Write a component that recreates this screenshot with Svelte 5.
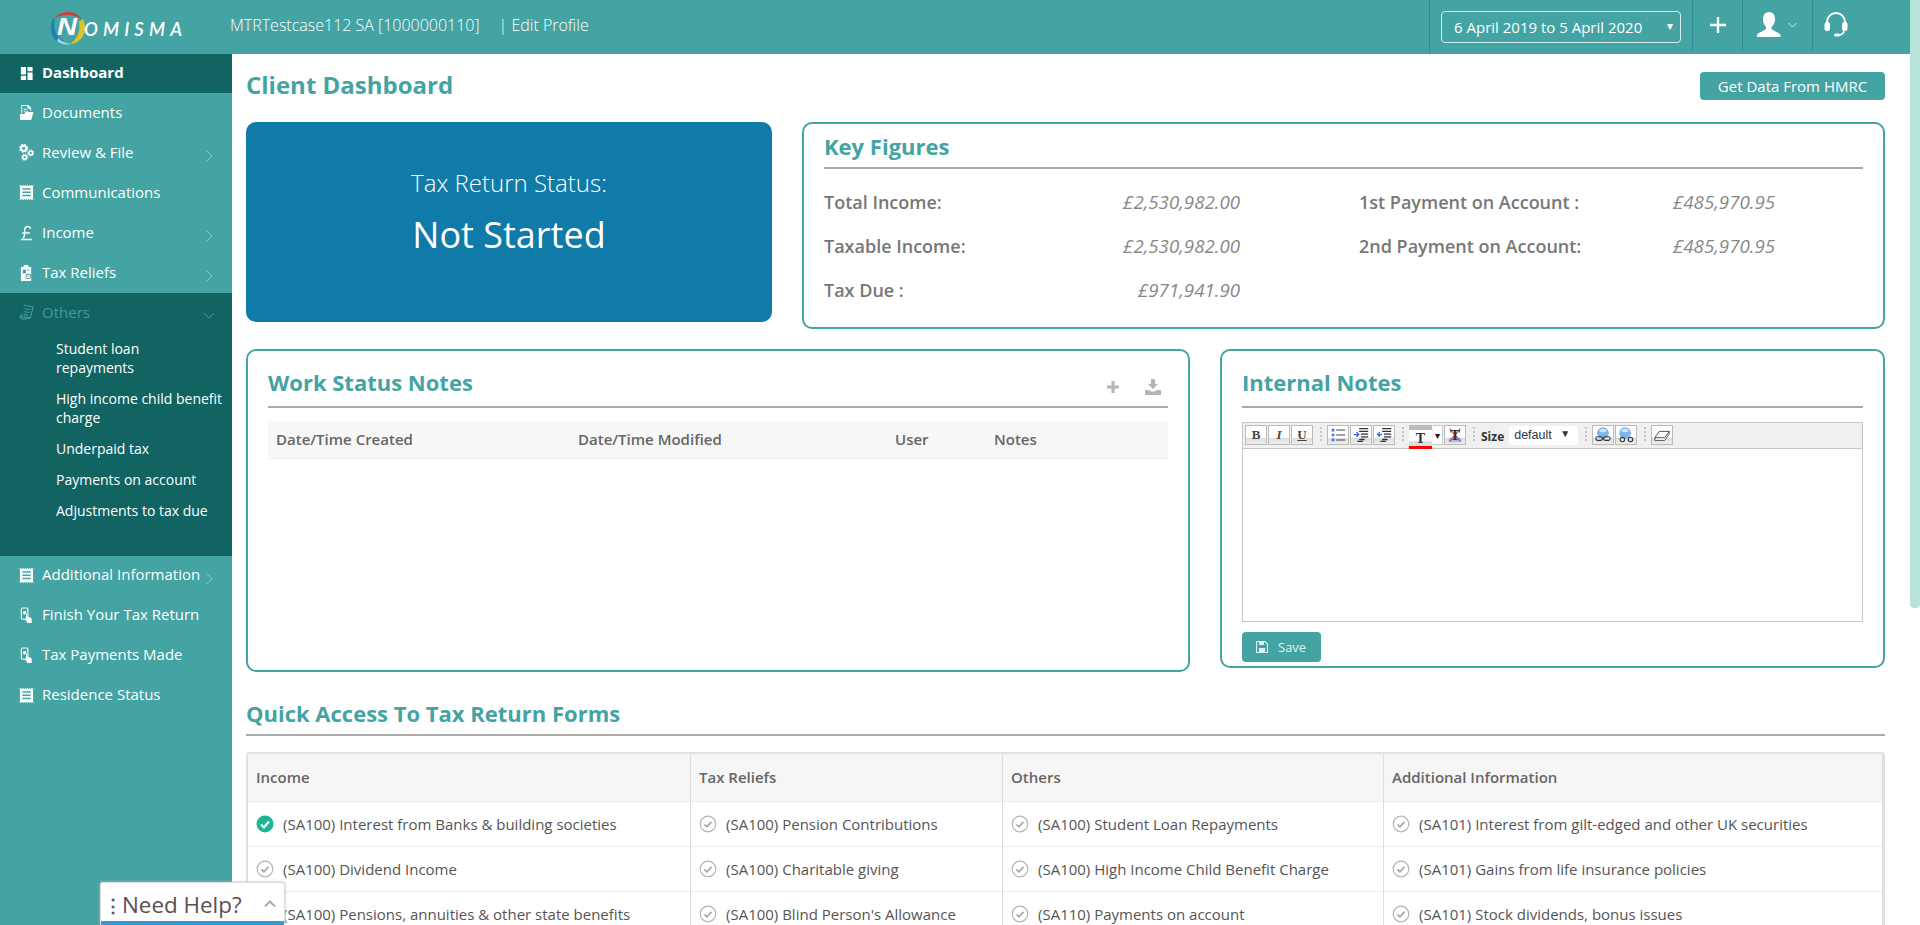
<script>
  const menuTop = [
    { label: 'Dashboard', icon: 'dash', active: true },
    { label: 'Documents', icon: 'docs' },
    { label: 'Review & File', icon: 'gears', arrow: true },
    { label: 'Communications', icon: 'list' },
    { label: 'Income', icon: 'pound', arrow: true },
    { label: 'Tax Reliefs', icon: 'clip', arrow: true }
  ];
  const subItems = [
    ['Student loan', 'repayments'],
    ['High income child benefit', 'charge'],
    ['Underpaid tax'],
    ['Payments on account'],
    ['Adjustments to tax due']
  ];
  const menuBottom = [
    { label: 'Additional Information', icon: 'list', arrow: true },
    { label: 'Finish Your Tax Return', icon: 'hand' },
    { label: 'Tax Payments Made', icon: 'hand' },
    { label: 'Residence Status', icon: 'list' }
  ];
  const headers = ['Income', 'Tax Reliefs', 'Others', 'Additional Information'];
  const rows = [
    [['(SA100) Interest from Banks & building societies', true], ['(SA100) Pension Contributions'], ['(SA100) Student Loan Repayments'], ['(SA101) Interest from gilt-edged and other UK securities']],
    [['(SA100) Dividend Income'], ['(SA100) Charitable giving'], ['(SA100) High Income Child Benefit Charge'], ['(SA101) Gains from life insurance policies']],
    [['(SA100) Pensions, annuities & other state benefits'], ["(SA100) Blind Person's Allowance"], ['(SA110) Payments on account'], ['(SA101) Stock dividends, bonus issues']]
  ];
</script>

{#snippet icon(name)}
  <svg class="micon" viewBox="0 0 16 18" fill="#fff">
    {#if name === 'dash'}
      <path d="M2 2h5.500v8H2zM9 2h5.500v4.500H9zM2 11.500h5.500V16H2zM9 8h5.500v8H9z"/>
    {:else if name === 'docs'}
      <path d="M2.500 1H10l3 3v3h-1V5H9V2H3.500v8h-1z"/><path d="M5 5h3v1H5zM5 7h5v1H5z"/><path d="M1 10.500h4.500L7 8.500h8.500L13 17H1z"/>
    {:else if name === 'gears'}
      <circle cx="5" cy="4.500" r="2.800" fill="none" stroke="#fff" stroke-width="2.200"/><circle cx="5" cy="4.500" r="4.300" fill="none" stroke="#fff" stroke-width="1.200" stroke-dasharray="1.800 1.600"/><circle cx="12.500" cy="9.500" r="2" fill="none" stroke="#fff" stroke-width="1.600"/><circle cx="12.500" cy="9.500" r="3.300" fill="none" stroke="#fff" stroke-width="1" stroke-dasharray="1.500 1.100"/><circle cx="6" cy="14" r="2" fill="none" stroke="#fff" stroke-width="1.600"/><circle cx="6" cy="14" r="3.300" fill="none" stroke="#fff" stroke-width="1" stroke-dasharray="1.500 1.100"/>
    {:else if name === 'list'}
      <path d="M1 2h14v14H1z"/><path d="M0.500 1.500h15M0.500 16.500h15" stroke="#fff" stroke-dasharray="1 1"/><path d="M3.500 4.500h9V6h-9zM3.500 8h9v1.500h-9zM3.500 11.500h9V13h-9z" fill="#44a3a3"/>
    {:else if name === 'pound'}
      <path d="M3.500 9.500h8M2 16.500h12M4.500 15c1.700-2 1.500-5 1.500-8 0-5.500 5.500-5.500 6.500-2" fill="none" stroke="#fff" stroke-width="1.500"/>
    {:else if name === 'clip'}
      <path d="M2 3h3V1h5v2h3v15H2z"/><circle cx="10" cy="13" r="3" fill="#44a3a3"/><circle cx="10" cy="13" r="2" fill="#fff"/><path d="M9.800 11.500V13h1.500" fill="none" stroke="#44a3a3" stroke-width=".8"/><path d="M4 6h3.500v4H4z" fill="#44a3a3"/><path d="M8.500 6H11v1H8.500z" fill="#44a3a3"/>
    {:else if name === 'hand'}
      <rect x="2.500" y="1" width="7" height="12" rx="1" fill="none" stroke="#fff" stroke-width="1.200"/><circle cx="6" cy="6" r="1.800"/><path d="M7.500 7.500c1-.5 1.500 0 1.500 1V10l3 1c1 .5 1.500 1 1.500 2v4H9l-3-4.500 1.500-.5z"/>
    {/if}
  </svg>
{/snippet}

{#snippet check(done)}
  {#if done}
    <svg class="tick" viewBox="0 0 18 18"><circle cx="9" cy="9" r="8.500" fill="#1db394"/><path d="M5 9.500l3 2.800 5-5.800" fill="none" stroke="#fff" stroke-width="2.200"/></svg>
  {:else}
    <svg class="tick" viewBox="0 0 18 18"><circle cx="9" cy="9" r="7.800" fill="none" stroke="#b5b5b5" stroke-width="1.200"/><path d="M5.500 9.500l2.500 2.300 4.500-5" fill="none" stroke="#aaa" stroke-width="1.800"/></svg>
  {/if}
{/snippet}

<div class="page">
  <header class="top">
    <div class="logo">
      <svg class="ring" viewBox="0 0 36 35">
        <path d="M5 8C10 1 24-1 32 9 24 4 12 4 5 8z" fill="#c9403a"/>
        <path d="M8 32C-1 26-1 12 5 7 3 15 4 26 14 31z" fill="#1f7fb5"/>
        <path d="M33 9c5 10 1 24-13 25 6-4 11-12 9-22z" fill="#dcc42a"/>
        <path d="M7 31c5 4 10 4 14 3-5-1-9-2-13-6z" fill="#a9d3ea"/>
      </svg>
      <span class="logo-n">N</span><span class="logo-rest">OMISMA</span>
    </div>
    <div class="client">MTRTestcase112 SA [1000000110]</div>
    <div class="edit">| Edit Profile</div>
    <div class="top-right">
      <div class="cell date-cell">
        <div class="date">6 April 2019 to 5 April 2020<span class="caret">▾</span></div>
      </div>
      <div class="cell plus-cell">
        <svg width="18" height="18" viewBox="0 0 18 18"><path d="M9 1v16M1 9h16" stroke="#fff" stroke-width="2.400"/></svg>
      </div>
      <div class="cell user-cell">
        <svg width="24" height="26" viewBox="0 0 24 26" fill="#fff"><path d="M12 0c4 0 6 3 6 7 0 3-1 6-3.500 8v2c2 2 7 3 9 6v2H0v-2c2-3 7-4 9-6v-2C7 13 6 10 6 7c0-4 2-7 6-7z"/></svg>
        <svg class="chev" width="9" height="6" viewBox="0 0 9 6"><path d="M.5 1l4 4 4-4" fill="none" stroke="#d5eeee"/></svg>
      </div>
      <div class="cell head-cell">
        <svg width="24" height="26" viewBox="0 0 24 26"><path d="M3 14V10a9 9 0 0118 0v4" fill="none" stroke="#fff" stroke-width="2"/><rect x="0.500" y="10" width="5.500" height="9" rx="2.500" fill="#fff"/><rect x="18" y="10" width="5.500" height="9" rx="2.500" fill="#fff"/><path d="M20 18c0 3-2 5-6 5" fill="none" stroke="#fff" stroke-width="1.500"/><rect x="10" y="21.500" width="6" height="3" rx="1.500" fill="#fff"/></svg>
      </div>
    </div>
  </header>

  <div class="body">
    <nav class="side">
      {#each menuTop as m}
        <div class="item" class:active={m.active}>
          {@render icon(m.icon)}<span>{m.label}</span>
          {#if m.arrow}<svg class="arrow" width="7" height="12" viewBox="0 0 7 12"><path d="M1 1l5 5-5 5" fill="none" stroke="#8ec9c9"/></svg>{/if}
        </div>
      {/each}
      <div class="others">
        <div class="item others-head">
          <svg class="micon" viewBox="0 0 16 18" fill="none" stroke="#3f9a9a" stroke-width="1.300"><path d="M5 1l10 2-3 12-10-2 1-3M6 5l6 1M5 8l6 1M5 11l5 1"/><path d="M1 13c0 2 2 3 4 3l7-1"/></svg>
          <span>Others</span>
          <svg class="arrow down" width="12" height="7" viewBox="0 0 12 7"><path d="M1 1l5 5 5-5" fill="none" stroke="#3f9a9a"/></svg>
        </div>
        <ul>
          {#each subItems as s}
            <li>{#each s as line}<span class="line">{line}</span>{/each}</li>
          {/each}
        </ul>
      </div>
      {#each menuBottom as m}
        <div class="item after">
          {@render icon(m.icon)}<span>{m.label}</span>
          {#if m.arrow}<svg class="arrow" width="7" height="12" viewBox="0 0 7 12"><path d="M1 1l5 5-5 5" fill="none" stroke="#8ec9c9"/></svg>{/if}
        </div>
      {/each}
    </nav>

    <main class="main">
      <div class="title-row">
        <h1>Client Dashboard</h1>
        <button class="hmrc">Get Data From HMRC</button>
      </div>

      <div class="row-one">
        <section class="status">
          <div class="s1">Tax Return Status:</div>
          <div class="s2">Not Started</div>
        </section>
        <section class="card key">
          <h2>Key Figures</h2>
          <div class="figures">
            <b>Total Income:</b><i>£2,530,982.00</i><span></span><b>1st Payment on Account :</b><i>£485,970.95</i>
            <b>Taxable Income:</b><i>£2,530,982.00</i><span></span><b>2nd Payment on Account:</b><i>£485,970.95</i>
            <b>Tax Due :</b><i>£971,941.90</i>
          </div>
        </section>
      </div>

      <div class="row-two">
        <section class="card work">
          <div class="h-tools">
            <h2>Work Status Notes</h2>
            <svg class="t-plus" width="14" height="14" viewBox="0 0 14 14"><path d="M7 1v12M1 7h12" stroke="#b5b5b5" stroke-width="3"/></svg>
            <svg class="t-down" width="16" height="16" viewBox="0 0 16 16" fill="#b5b5b5"><path d="M6 0h4v5h3l-5 5-5-5h3zM0 11h4l2 1.500h4l2-1.500h4v5H0z"/></svg>
          </div>
          <div class="notes-head"><span>Date/Time Created</span><span>Date/Time Modified</span><span>User</span><span>Notes</span></div>
        </section>
        <section class="card internal">
          <h2>Internal Notes</h2>
          <div class="editor">
            <div class="toolbar">
              <div class="btn"><span>B</span></div><div class="btn"><em>I</em></div><div class="btn"><u>U</u></div>
              <div class="grip"></div>
              <div class="btn"><svg viewBox="0 0 20 20" class="ti"><path d="M3 3h3v3H3zM3 8.500h3v3H3zM3 14h3v3H3z" fill="#3c78f0"/><path d="M8 4.500h10M8 10h10M8 15.500h10" stroke="#444" stroke-width="1.200"/></svg></div>
              <div class="btn"><svg viewBox="0 0 20 20" class="ti"><path d="M8 3h10M8 6h10M10 9h8M10 12h8M8 15h6M6 17h6" stroke="#333" stroke-width="1.400"/><path d="M2 9.500h5M5 7l2.500 2.500L5 12" stroke="#2a6cf0" stroke-width="1.400" fill="none"/></svg></div>
              <div class="btn"><svg viewBox="0 0 20 20" class="ti"><path d="M8 3h10M8 6h10M10 9h8M10 12h8M8 15h6M6 17h6" stroke="#333" stroke-width="1.400"/><path d="M8 9.500H3M5.500 7L3 9.500 5.500 12" stroke="#2a6cf0" stroke-width="1.400" fill="none"/></svg></div>
              <div class="grip"></div>
              <div class="color"><span>T</span></div><div class="drop">▾</div>
              <div class="btn clear"><span>T</span><svg viewBox="0 0 20 20" class="x"><path d="M3 14c3-2 11-2 14 0v4H3z" fill="#9dc0ee"/><path d="M4 3l12 14M16 3L4 17" stroke="#e33" stroke-width="1.200"/></svg></div>
              <div class="grip"></div>
              <strong class="size">Size</strong>
              <div class="select"><span>default</span><span class="sel-c">▼</span></div>
              <div class="grip"></div>
              <div class="btn"><svg viewBox="0 0 20 20" class="ti"><circle cx="10" cy="8" r="6.500" fill="#7db4ee"/><ellipse cx="10" cy="5" rx="4" ry="2" fill="#cfe5fa"/><rect x="2" y="12" width="7.500" height="4" rx="2" fill="none" stroke="#333" stroke-width="1.200"/><rect x="10.500" y="12" width="7.500" height="4" rx="2" fill="none" stroke="#333" stroke-width="1.200"/></svg></div>
              <div class="btn"><svg viewBox="0 0 20 20" class="ti"><circle cx="9" cy="8" r="6.500" fill="#7db4ee"/><ellipse cx="9" cy="5" rx="4" ry="2" fill="#cfe5fa"/><circle cx="6" cy="15" r="2.500" fill="none" stroke="#333" stroke-width="1.200"/><circle cx="15" cy="15" r="2.500" fill="none" stroke="#333" stroke-width="1.200"/></svg></div>
              <div class="grip"></div>
              <div class="btn"><svg viewBox="0 0 20 20" class="ti"><path d="M2 13l5-7h11l-5 7zM2 13v3h11l5-7V6" fill="#fff" stroke="#444"/></svg></div>
            </div>
            <div class="edit-area"></div>
          </div>
          <button class="save">
            <svg width="12" height="12" viewBox="0 0 12 12"><path d="M1 .5h8L11.500 3v8.500H.5V.5z" fill="none" stroke="#dff2f2" stroke-width="1.200"/><path d="M3 1h5v3H3zM3 7h6v4H3z" fill="#dff2f2"/></svg>
            <span>Save</span>
          </button>
        </section>
      </div>

      <h2 class="quick">Quick Access To Tax Return Forms</h2>
      <div class="forms">
        {#each headers as h}<div class="th">{h}</div>{/each}
        {#each rows as r}
          {#each r as c}
            <div class="td">{@render check(c[1])}<span>{c[0]}</span></div>
          {/each}
        {/each}
      </div>
    </main>
  </div>

  <div class="help">
    <div class="help-in"><span class="dots">⋮</span><span class="need">Need Help?</span>
      <svg class="help-c" width="12" height="8" viewBox="0 0 12 8"><path d="M1 6.500l5-5 5 5" fill="none" stroke="#aaa" stroke-width="2"/></svg>
    </div>
  </div>
  <div class="scroll"></div>
</div>

<style>
  :global(body) { margin: 0; overflow: hidden; background: #fff; }
  * { box-sizing: border-box; }
  .page { position: relative; width: 1920px; height: 925px; overflow: hidden; font-family: "Open Sans", sans-serif; color: #666; }

  .top { height: 54px; background: #44a3a3; color: #fff; display: flex; align-items: flex-start; }
  .logo { width: 230px; height: 54px; position: relative; flex: none; padding-left: 50px; display: flex; align-items: center; font-style: italic; font-weight: 600; }
  .ring { position: absolute; left: 50px; top: 10px; width: 36px; height: 35px; }
  .logo-n { position: relative; font-size: 24px; margin-left: 7px; width: 27px; font-family: "Liberation Sans", sans-serif; transform: scaleX(1.15); transform-origin: left center; }
  .logo-rest { position: relative; font-size: 18.500px; letter-spacing: 5.100px; font-family: "Lato", sans-serif; margin-top: 3px; }
  .client, .edit { font-size: 16px; font-weight: 300; line-height: 50px; white-space: nowrap; }
  .edit { margin-left: 19px; }
  .top-right { margin-left: auto; margin-right: 60px; display: flex; height: 54px; }
  .cell { border-left: 1px solid #2f8c8f; height: 50px; display: flex; align-items: center; justify-content: center; }
  .date-cell { width: 263px; height: 54px; padding-left: 11px; justify-content: flex-start; }
  .date { width: 240px; height: 32px; border: 1px solid #d5ecec; border-radius: 4px; font-size: 15px; line-height: 30px; padding-left: 12px; position: relative; white-space: nowrap; }
  .caret { position: absolute; right: 7px; top: -1px; font-size: 12px; }
  .plus-cell { width: 50px; }
  .user-cell { width: 70px; gap: 7px; padding-right: 2px; }
  .head-cell { width: 48px; padding-right: 1px; }

  .body { display: flex; align-items: stretch; height: 871px; }
  .side { width: 232px; flex: none; background: #44a3a3; color: #fff; }
  .item { height: 40px; display: flex; align-items: center; padding-left: 19px; font-size: 15px; position: relative; white-space: nowrap; line-height: 1; }
  .item span { margin-top: -2px; }
  .item.after span { margin-top: -4px; }
  .micon { width: 15px; height: 17px; margin-right: 8px; flex: none; margin-top: -1px; }
  .active { background: #126463; font-weight: 700; height: 39px; }
  .arrow { position: absolute; left: 206px; top: 17px; }
  .arrow.down { left: 203px; top: 19px; }
  .others { background: #126463; height: 263px; }
  .others-head { color: #3f9a9a; }
  ul { list-style: none; margin: 0; padding: 6px 0 0 56px; font-size: 14px; line-height: 19px; }
  li { margin-bottom: 12px; }
  .line { display: block; white-space: nowrap; }

  .main { flex: 1; padding: 0 35px 0 14px; min-width: 0; }
  .title-row { display: flex; justify-content: space-between; height: 68px; }
  h1 { margin: 15px 0 0; font-size: 24px; line-height: 32px; color: #44a3a3; font-weight: 700; }
  .hmrc { margin-top: 18px; width: 185px; height: 28px; background: #44a3a3; color: #fff; border: 0; border-radius: 4px; font: 15px "Open Sans", sans-serif; padding: 0; }
  .row-one { display: flex; gap: 30px; align-items: flex-start; }
  .status { width: 526px; height: 200px; background: #107aa9; border-radius: 10px; color: #fff; text-align: center; padding-top: 45px; }
  .s1 { font-size: 24px; font-weight: 300; line-height: 32px; }
  .s2 { font-size: 36px; line-height: 50px; margin-top: 11px; }
  .card { border: 2px solid #44a3a3; border-radius: 10px; padding: 0 20px; }
  .key { flex: 1; height: 207px; }
  h2 { margin: 0; font-size: 22px; line-height: 30px; font-weight: 700; color: #44a3a3; }
  .card h2 { padding-top: 7px; height: 45px; border-bottom: 2px solid #aaa; }
  .figures { display: grid; grid-template-columns: 180px 236px 119px 300px 116px; grid-auto-rows: 44px; margin-top: 13px; line-height: 40px; }
  .figures b { color: #777; font-weight: 600; font-size: 18px; white-space: nowrap; }
  .figures i { color: #888; text-align: right; font-size: 18.700px; white-space: nowrap; }
  .row-two { display: flex; justify-content: space-between; align-items: flex-start; margin-top: 20px; }
  .work { width: 944px; height: 323px; }
  .h-tools { position: relative; }
  .row-two h2, .h-tools h2 { height: 57px; padding-top: 16px; }
  .t-plus { position: absolute; left: 838px; top: 29px; }
  .t-down { position: absolute; left: 877px; top: 28px; }
  .notes-head { margin-top: 13px; height: 38px; background: #f7f7f7; border-bottom: 1px solid #eee; display: grid; grid-template-columns: 302px 317px 99px 1fr; padding-left: 8px; font-size: 15px; font-weight: 600; line-height: 36px; color: #666; }
  .internal { width: 665px; height: 319px; }
  .editor { margin-top: 14px; border: 1px solid #c6c6c6; height: 200px; }
  .toolbar { height: 26px; background: #f0f0f0; border-bottom: 1px solid #c6c6c6; display: flex; align-items: flex-start; padding: 2px 0 0 2px; position: relative; }
  .btn { width: 22px; height: 20px; margin-right: 1px; border: 1px solid #bbb; background: linear-gradient(#fff 65%, #ddd 68%, #eee); display: flex; align-items: center; justify-content: center; position: relative; font-family: "Liberation Serif", serif; font-weight: 700; color: #444; font-size: 13px; flex: none; }
  .btn em { font-family: "Liberation Serif", serif; }
  .ti { width: 18px; height: 18px; }
  .grip { width: 2px; height: 15px; margin: 2px 5px 0 6px; background: repeating-linear-gradient(#c8c8c8 0 2px, transparent 2px 4px); flex: none; }
  .color { width: 23px; height: 24px; border-top: 5px solid #bbb; border-bottom: 3px solid #f00; background: linear-gradient(#fff 70%, #ddd 72%); text-align: center; font-family: "Liberation Serif", serif; font-weight: 700; font-size: 14px; color: #333; line-height: 18px; flex: none; margin-right: 1px; }
  .drop { width: 10px; height: 20px; background: #fff; border: 1px solid #ccc; border-left: 0; font-size: 10px; color: #111; line-height: 18px; text-align: center; margin-right: 1px; flex: none; }
  .clear { font-size: 15px; color: #333; }
  .x { position: absolute; left: 0; top: 0; width: 20px; height: 18px; }
  .clear span { position: relative; z-index: 1; }
  .size { font: 700 12px "Open Sans", sans-serif; color: #333; margin: 3px 5px 0 1px; }
  .select { width: 69px; height: 19px; background: #fff; border-radius: 3px; font: 12.500px "Liberation Sans", sans-serif; color: #334; display: flex; justify-content: space-between; padding: 2px 8px 0 5px; margin-top: 1px; margin-right: 1px; flex: none; }
  .sel-c { font-size: 10px; color: #333; }
  .edit-area { height: 172px; background: #fff; }
  .save { margin-top: 10px; width: 79px; height: 30px; background: #44a3a3; border: 0; border-radius: 4px; color: #dff2f2; font: 13px "Open Sans", sans-serif; display: flex; align-items: center; gap: 10px; padding: 0 0 0 14px; }

  .quick { margin-top: 22px; height: 42px; padding: 3px 0 0; line-height: 32px; font-size: 22px; border-bottom: 2px solid #aaa; }
  .forms { margin-top: 16px; display: grid; grid-template-columns: 443px 312px 381px 1fr; border: 2px solid #e2e2e2; border-width: 2px 2px 0 2px; border-radius: 3px 3px 0 0; }
  .th { height: 48px; background: #f6f6f6; border-bottom: 1px solid #ececec; border-right: 1px solid #ddd; padding-left: 8px; font-size: 15px; font-weight: 600; line-height: 46px; color: #666; }
  .td { height: 45px; border-bottom: 1px solid #ececec; border-right: 1px solid #ddd; display: flex; align-items: center; padding-left: 8px; font-size: 15px; color: #555; white-space: nowrap; }
  .tick { width: 18px; height: 18px; flex: none; margin-right: 9px; }

  .help { position: absolute; left: 100px; top: 882px; width: 185px; height: 43px; background: #fff; border: 1px solid #ddd; border-bottom: 0; border-radius: 3px 3px 0 0; box-shadow: 0 0 3px #bbb; }
  .help-in { height: 42px; border-bottom: 4px solid #3498db; padding: 6px 0 0 3px; position: relative; display: flex; align-items: center; color: #555; }
  .dots { font-size: 18px; font-weight: 700; }
  .need { font-size: 22.400px; line-height: 32px; color: #5a5050; }
  .help-c { position: absolute; right: 8px; top: 17px; }
  .scroll { position: absolute; right: 0; top: 0; width: 10px; height: 608px; background: #b8e2d8; border-radius: 0 0 4px 4px; }
</style>
